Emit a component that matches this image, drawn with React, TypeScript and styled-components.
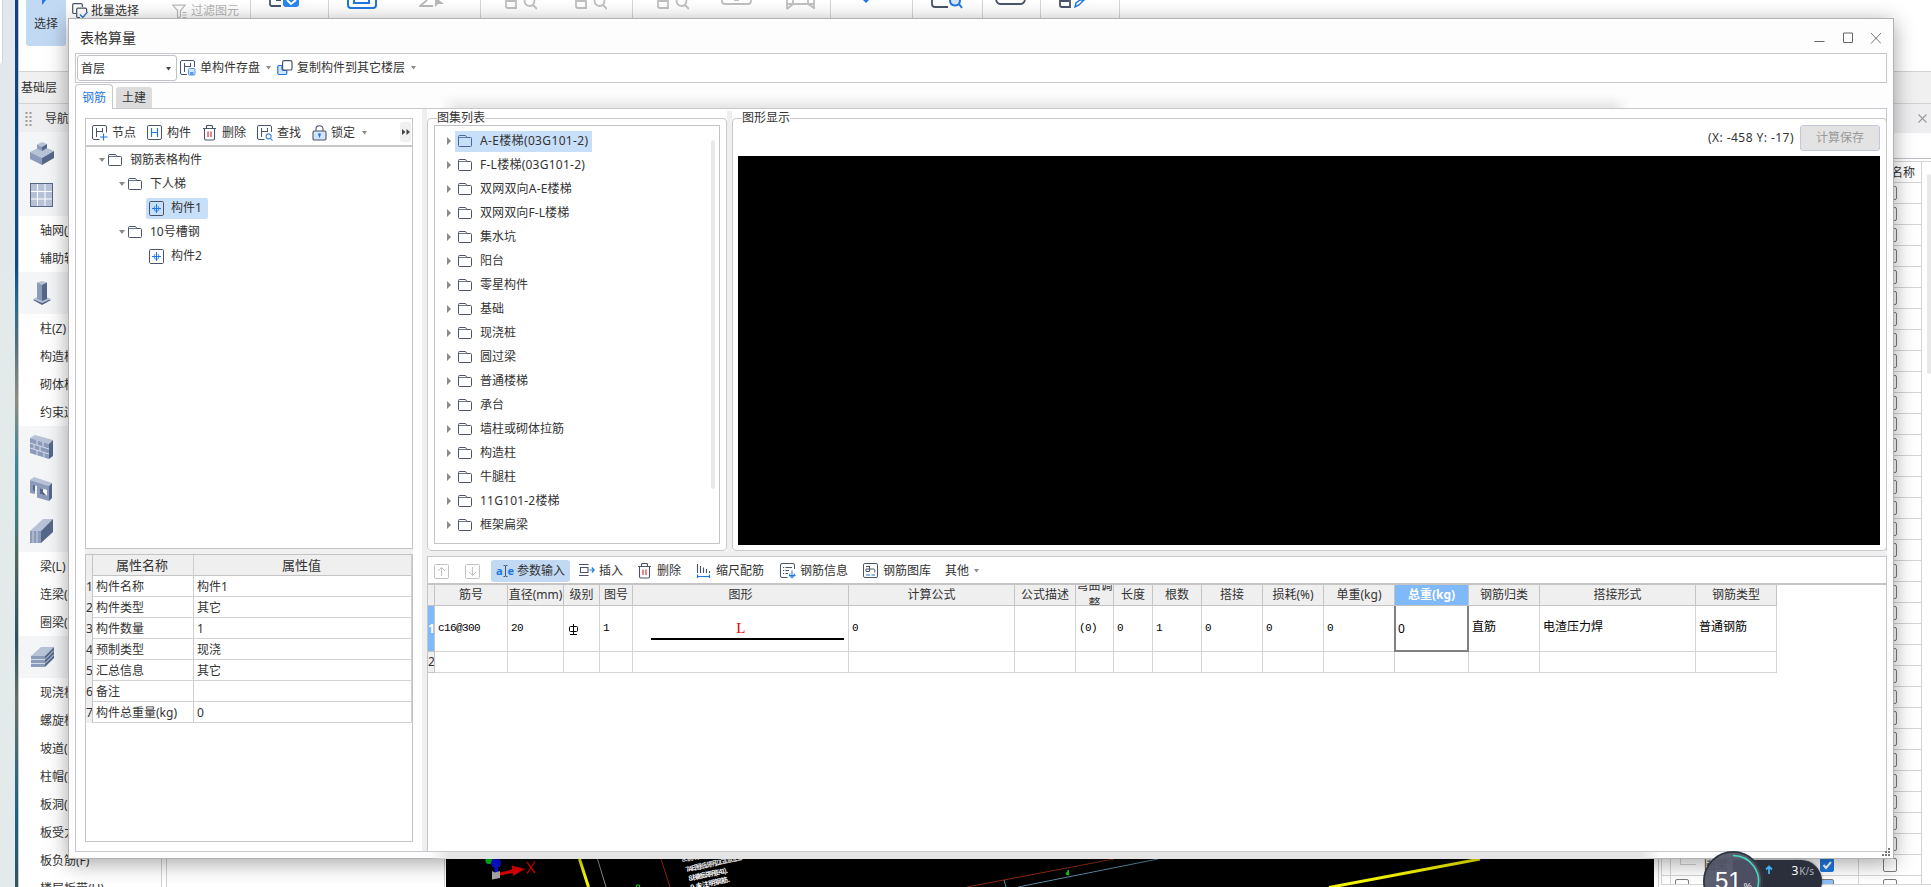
import React from 'react';
import styled, { createGlobalStyle, css } from 'styled-components';

const INK = '#4a5468';
const BLUE = '#1f78e0';
const PALE = '#d4e5fb';

type Tone = { selected?: boolean };

/* ---------- data ---------- */

type NavEntry = { label?: string; icon?: React.ReactNode };

const atlas = [
  { name: 'A-E楼梯(03G101-2)', spacing: 0.35 },
  { name: 'F-L楼梯(03G101-2)', spacing: 0.25 },
  { name: '双网双向A-E楼梯', spacing: 0.2 },
  { name: '双网双向F-L楼梯', spacing: 0.1 },
  { name: '集水坑' },
  { name: '阳台' },
  { name: '零星构件' },
  { name: '基础' },
  { name: '现浇桩' },
  { name: '圆过梁' },
  { name: '普通楼梯' },
  { name: '承台' },
  { name: '墙柱或砌体拉筋' },
  { name: '构造柱' },
  { name: '牛腿柱' },
  { name: '11G101-2楼梯', spacing: 0.2 },
  { name: '框架扁梁' },
];

const properties = [
  ['构件名称', '构件1'],
  ['构件类型', '其它'],
  ['构件数量', '1'],
  ['预制类型', '现浇'],
  ['汇总信息', '其它'],
  ['备注', ''],
  ['构件总重量(kg)', '0'],
];

const columns = [
  { title: '筋号', width: 73, value: 'c16@300' },
  { title: '直径(mm)', width: 56, value: '20' },
  { title: '级别', width: 36, value: 'grade' },
  { title: '图号', width: 33, value: '1' },
  { title: '图形', width: 216, value: 'shape' },
  { title: '计算公式', width: 166, value: '0' },
  { title: '公式描述', width: 61, value: '' },
  { title: '弯曲调整', width: 38, value: '(0)' },
  { title: '长度', width: 39, value: '0' },
  { title: '根数', width: 49, value: '1' },
  { title: '搭接', width: 61, value: '0' },
  { title: '损耗(%)', width: 61, value: '0' },
  { title: '单重(kg)', width: 71, value: '0' },
  { title: '总重(kg)', width: 74, value: '0', current: true },
  { title: '钢筋归类', width: 71, value: '直筋', han: true },
  { title: '搭接形式', width: 156, value: '电渣压力焊', han: true },
  { title: '钢筋类型', width: 81, value: '普通钢筋', han: true },
];

/* ---------- icons ---------- */

const Svg = ({
  w = 16,
  h = 16,
  children,
}: {
  w?: number;
  h?: number;
  children: React.ReactNode;
}) => (
  <svg width={w} height={h} viewBox={`0 0 ${w} ${h}`} fill="none" style={{ flex: 'none' }}>
    {children}
  </svg>
);

const FolderIcon = ({ selected }: Tone) => (
  <Svg w={14} h={12}>
    <path
      d="M.5 10.500V1.500q0-1 1-1H7.500l1.500 2h3.500q1 0 1 1v7q0 1-1 1h-11q-1 0-1-1z"
      stroke={selected ? '#47669a' : INK}
    />
    <path d="M1 2.500h8" stroke={selected ? '#47669a' : INK} strokeWidth=".8" />
  </Svg>
);

const MemberIcon = () => (
  <Svg w={15} h={15}>
    <rect x=".5" y=".5" width="14" height="14" rx="1.2" stroke={INK} />
    <path d="M7.500 3v9M3 7.500h9" stroke={BLUE} />
    <path d="M6 5Q4 7.500 6 10h3Q11 7.500 9 5" stroke={BLUE} strokeWidth=".8" />
  </Svg>
);

const NodeIcon = () => (
  <Svg>
    <path d="M7.500 14.500H2q-1.500 0-1.500-1.500V2Q.5.500 2 .5h11q1.500 0 1.500 1.500v5.500" stroke={INK} />
    <path d="M4.500 3v9M10.500 3v4.500M4.500 6.500h6" stroke={INK} />
    <path d="M11.500 8.500v7M8 12h7.500" stroke={BLUE} strokeWidth="1.2" />
  </Svg>
);

const PartIcon = () => (
  <Svg>
    <rect x=".5" y=".5" width="14" height="14" rx="1.400" stroke={INK} />
    <path d="M4.500 3v9M10.500 3v9M4.500 7.500h6" stroke={BLUE} strokeWidth="1.200" />
  </Svg>
);

const TrashIcon = () => (
  <Svg>
    <path d="M1 3.500h13M4.500 3.400V1.500q0-1 1-1h4q1 0 1 1v1.800M2.500 3.800v9.700q0 1.500 1.500 1.500h7q1.500 0 1.500-1.500V3.800" stroke={INK} strokeWidth="1.100" />
    <path d="M6 6.500V12M9 6.500V12" stroke="#d9333f" strokeWidth="1.200" />
  </Svg>
);

const FindIcon = () => (
  <Svg>
    <path d="M7.500 14.500H2q-1.500 0-1.500-1.500V2Q.5.500 2 .5h11q1.500 0 1.500 1.500v5" stroke={INK} />
    <path d="M4.500 3v9M10.500 3v4M4.500 6.500h6" stroke={INK} />
    <circle cx="11.600" cy="11.400" r="2.500" stroke="#3a8ae6" strokeWidth="1.100" />
    <path d="M13.400 13.300l2.200 2.300" stroke="#3a8ae6" strokeWidth="1.100" />
  </Svg>
);

const LockIcon = () => (
  <Svg w={15}>
    <path d="M4 6V4q0-3.300 3.500-3.300T11 4v2" stroke={INK} strokeWidth="1.100" />
    <rect x="1" y="6" width="13" height="9" rx="1.200" stroke={INK} strokeWidth="1.100" fill={PALE} />
    <path d="M7.500 9v3.500" stroke={BLUE} strokeWidth="1.200" />
    <circle cx="7.500" cy="9.600" r="1.400" fill={BLUE} />
  </Svg>
);

const SaveIcon = () => (
  <Svg>
    <path d="M7 14.500H2q-1.500 0-1.500-1.500V2Q.5.500 2 .5h11q1.500 0 1.500 1.500v5" stroke={INK} />
    <path d="M4.500 3v9M10.500 3v4M4.500 6.500h6" stroke={INK} />
    <rect x="8.500" y="8.500" width="6.500" height="6.500" rx=".8" stroke="#5a9bea" fill={PALE} />
    <path d="M10 12h3.500v3H10z" fill="#5a9bea" />
  </Svg>
);

const CopyIcon = () => (
  <Svg>
    <path d="M5 5.500H2Q.8 5.500.8 6.700v6.600q0 1.200 1.200 1.200h6.600q1.200 0 1.200-1.200V10.500H6.200Q5 10.500 5 9.300z" stroke={BLUE} strokeWidth="1.200" fill={PALE} />
    <rect x="5.600" y=".6" width="9.400" height="9.400" rx="1.600" stroke={INK} strokeWidth="1.200" fill="#fff" />
  </Svg>
);

const ArrowBoxIcon = ({ down }: { down?: boolean }) => (
  <Svg w={15} h={15}>
    <rect x=".5" y=".5" width="14" height="14" rx="1" stroke="#c3c3c3" />
    <path
      d={down ? 'M7.500 3v8.500M4 8l3.500 3.500L11 8' : 'M7.500 12V3.500M4 7l3.500-3.500L11 7'}
      stroke="#c3c3c3"
    />
  </Svg>
);

const InsertIcon = () => (
  <Svg>
    <path d="M0 1.500h9.500M0 12.500h9.500M1.500 4.500h7.500v5H1.500z" stroke={INK} strokeWidth="1.100" />
    <path d="M10.500 7H15M12.800 4.500L15.200 7l-2.400 2.500" stroke={BLUE} strokeWidth="1.200" />
  </Svg>
);

const ScaleIcon = () => (
  <Svg>
    <path d="M1.500 1v9M4.500 3v7M7.500 4.500V10M10.500 6v4M13.500 8v2" stroke={INK} strokeWidth="1.100" />
    <path d="M1.500 11.500V15M13.500 11.500V15M1.500 13.500h12" stroke={BLUE} strokeWidth="1.200" />
  </Svg>
);

const InfoIcon = () => (
  <Svg>
    <path d="M7.500 14.500H2q-1.500 0-1.500-1.500V2Q.5.500 2 .5h11q1.500 0 1.500 1.500v4" stroke={INK} />
    <path d="M3 4.500h1.200M5.500 4.500H12M3 7.500h1.200M5.500 7.500H9M3 10.500h1.200M5.500 10.500H8" stroke={INK} />
    <path d="M12 7.500v8M9 12.500h6.500M10 10.500q-1.500 2 .5 3.500h3q2-1.500.5-3.500" stroke={BLUE} />
  </Svg>
);

const LibraryIcon = () => (
  <Svg>
    <rect x=".5" y=".5" width="14" height="14" rx="1.400" stroke={INK} />
    <path d="M3 3.500h3.500v5H3V6h7.500q1.300 0 1.300 1.300V9.500M6.500 3v3" stroke={INK} />
    <path d="M3 12h4M8.500 12h3.500" stroke={BLUE} strokeWidth="1.200" />
  </Svg>
);

const FilterIcon = () => (
  <Svg>
    <path d="M.8 2.200h12.400L8.500 7.500v6L5.500 16V7.500zM10.500 9.500h4M10.500 12h4M10.500 14.500h4" stroke="#bdbdbd" strokeWidth="1.200" />
  </Svg>
);

const BatchIcon = () => (
  <Svg>
    <path d="M4 10.500H2q-1.300 0-1.300-1.300V2Q.7.700 2 .7h7q1.300 0 1.300 1.300v2" stroke={INK} strokeWidth="1.200" />
    <path d="M8 14.500H6q-1.300 0-1.300-1.300V6.500Q4.700 5.200 6 5.200h7.300q1.300 0 1.300 1.300V9" stroke={INK} strokeWidth="1.200" />
    <path d="M8 11.500l2.800 3L15.500 9" stroke={BLUE} strokeWidth="1.300" />
  </Svg>
);

const BlocksIcon = () => (
  <Svg w={24} h={24}>
    <path d="M0 11l12-6 12 5-12 7z" fill="#b8c2d6" />
    <path d="M0 11l12 6v7L0 18z" fill="#8d9bbb" />
    <path d="M12 17l12-7v7l-12 7z" fill="#556789" />
    <path d="M7 3.500L12 1l5 2-5 3z" fill="#b8c2d6" />
    <path d="M7 3.500L12 6v4L7 7.500z" fill="#8d9bbb" />
    <path d="M12 6l5-3v4l-5 3z" fill="#556789" />
  </Svg>
);

const AxisIcon = () => (
  <Svg w={24} h={24}>
    <rect x=".5" y=".5" width="22" height="23" fill="#b8c2d6" stroke="#556789" />
    <path d="M7.500 1v22M15 1v22M1 8.500h21M1 16h21" stroke="#fff" />
  </Svg>
);

const ColumnIcon = () => (
  <Svg w={24} h={24}>
    <path d="M3 19l9-4 9 4-9 5z" fill="#556789" />
    <path d="M3 18l9-4 9 4-9 4z" fill="#b8c2d6" />
    <path d="M7 1.500h5V20l-5-2z" fill="#8d9bbb" />
    <path d="M12 1.500h5V18l-5 2z" fill="#556789" />
    <path d="M7 1.500L12 0l5 1.500L12 4z" fill="#b8c2d6" />
  </Svg>
);

const WallIcon = () => (
  <Svg w={24} h={24}>
    <path d="M0 3l5-3 18 5-4 4z" fill="#b8c2d6" />
    <path d="M0 3l19 6v15L0 18z" fill="#8d9bbb" />
    <path d="M19 9l4-4v16l-4 3z" fill="#556789" />
    <path d="M0 8l19 6M0 13l19 6M7 5v5M13 7v5M4 9.500v5M10 11.500v5M7 15v5M14 17.500v5" stroke="#d5dbe8" />
  </Svg>
);

const OpeningIcon = () => (
  <Svg w={24} h={24}>
    <path d="M0 3l4-3 18 6-3 3z" fill="#b8c2d6" />
    <path d="M0 3l19 6v15L7 20.500V9L5 8.500V17l-5-1z" fill="#8d9bbb" />
    <path d="M5 8.500V15l-2-2V8zM19 9l3-3v15l-3 3z" fill="#556789" />
    <path d="M10 11l7 2v6l-7-2z" fill="#fff" />
    <path d="M10 11l3 1v3l4 4-7-2z" fill="#556789" />
  </Svg>
);

const BeamIcon = () => (
  <Svg w={24} h={24}>
    <path d="M0 12L13 0h10L11 12z" fill="#b8c2d6" />
    <path d="M0 12h11v12H0z" fill="#8d9bbb" />
    <path d="M11 12L23 0v13L11 24z" fill="#556789" />
    <path d="M3 12v12M7 12v12" stroke="#c9d0e0" />
  </Svg>
);

const SlabIcon = () => (
  <Svg w={24} h={24}>
    <path d="M1 11L11 2h13L15 11z" fill="#b8c2d6" />
    <path d="M1 11h14v11H1z" fill="#8d9bbb" />
    <path d="M15 11l9-9v11l-9 9z" fill="#556789" />
    <path d="M1 14.500h14l9-9M1 18.500h14l9-9" stroke="#d5dbe8" />
  </Svg>
);

const Caret = () => (
  <Svg w={5} h={4}>
    <path d="M0 0h5L2.500 3.500z" fill="#8a8a8a" />
  </Svg>
);

/* ribbon icons are cut off by the top edge */
const GreyView = () => (
  <Svg w={32} h={10}>
    <path d="M1 0v6q0 2 2 2h8V0M1 1h9" stroke="#c0c0c0" strokeWidth="1.800" />
    <path d="M19.500 0q0 6 5 6t5-6M28 5l4 4" stroke="#c0c0c0" strokeWidth="1.800" />
  </Svg>
);

const navEntries: NavEntry[] = [
  { icon: <BlocksIcon /> },
  { icon: <AxisIcon /> },
  { label: '轴网(J)' },
  { label: '辅助轴' },
  { icon: <ColumnIcon /> },
  { label: '柱(Z)' },
  { label: '构造柱' },
  { label: '砌体柱' },
  { label: '约束边' },
  { icon: <WallIcon /> },
  { icon: <OpeningIcon /> },
  { icon: <BeamIcon /> },
  { label: '梁(L)' },
  { label: '连梁(G)' },
  { label: '圈梁(E)' },
  { icon: <SlabIcon /> },
  { label: '现浇板' },
  { label: '螺旋板' },
  { label: '坡道(P)' },
  { label: '柱帽(V)' },
  { label: '板洞(N)' },
  { label: '板受力' },
  { label: '板负筋(F)' },
  { label: '楼层板带(H)' },
];

/* ---------- background application ---------- */

const Ribbon = () => (
  <RibbonBar>
    <RibbonGroup width={232} pad={7} gap={0}>
      <SelectButton>
        <Svg w={14} h={8}>
          <path d="M3 0v5l4-5z" fill={BLUE} />
        </Svg>
        选择
      </SelectButton>
      <RibbonItem space={6}>
        <BatchIcon />
        批量选择
      </RibbonItem>
      <RibbonItem space={33} muted>
        <FilterIcon />
        过滤图元
      </RibbonItem>
    </RibbonGroup>
    <RibbonGroup width={78} pad={18}>
      <Svg w={31} h={18}>
        <path d="M1 0v4q0 2 2 2h9M7 0h5" stroke={INK} strokeWidth="1.800" />
        <path d="M14 0h16v4q0 3-3 3H17q-3 0-3-3z" fill="#2a86f3" />
        <path d="M18 0l4 4 5-4" stroke="#fff" strokeWidth="2" />
      </Svg>
    </RibbonGroup>
    <RibbonGroup width={152} pad={18} gap={42}>
      <Svg w={30} h={10}>
        <path d="M1 0v5q0 3 3 3h22q3 0 3-3V0M7 0v3h15V0" stroke={BLUE} strokeWidth="2" />
      </Svg>
      <Svg w={28} h={10}>
        <path d="M8 0L1 6h13" stroke="#b9b9b9" strokeWidth="1.800" />
        <path d="M16 0v7l3-3h6L20 0z" fill="#b9b9b9" />
      </Svg>
    </RibbonGroup>
    <RibbonGroup width={152} pad={24} gap={38}>
      <GreyView />
      <GreyView />
    </RibbonGroup>
    <RibbonGroup width={198} pad={24} gap={32}>
      <GreyView />
      <Svg w={32} h={10}>
        <path d="M1 0v1q0 3 3 3h23q3 0 3-3V0M13 0h5" stroke="#c0c0c0" strokeWidth="1.800" />
      </Svg>
      <Svg w={32} h={10}>
        <path d="M2 0v9M29 0v9M2 4h27M8 0v4M8 4L2 9M23 0v4l6 4" stroke="#c0c0c0" strokeWidth="1.800" />
      </Svg>
    </RibbonGroup>
    <RibbonGroup width={82} pad={32}>
      <Svg w={6} h={4}>
        <path d="M0 0h6L3 3z" fill={BLUE} />
      </Svg>
    </RibbonGroup>
    <RibbonGroup width={70} pad={18}>
      <Svg w={32} h={10}>
        <path d="M1 0v4q0 3 3 3h13" stroke={INK} strokeWidth="1.800" />
        <path d="M19 0q0 5.500 5 5.500T29 0M28 4l3 4" stroke={BLUE} strokeWidth="2" fill={PALE} />
      </Svg>
    </RibbonGroup>
    <RibbonGroup width={58} pad={12}>
      <Svg w={32} h={6}>
        <path d="M1 0q1 4 5 4h19q4 0 5-4" stroke={INK} strokeWidth="1.800" />
      </Svg>
    </RibbonGroup>
    <RibbonGroup width={79} pad={18}>
      <Svg w={32} h={10}>
        <path d="M1 0v5q0 2 2 2h8V0M1 1h9" stroke={INK} strokeWidth="1.800" />
        <path d="M16 7l1-4 4-3h4l-5 5z" stroke={BLUE} strokeWidth="1.400" />
      </Svg>
    </RibbonGroup>
  </RibbonBar>
);

const Viewport = () => (
  <svg width="1208" height="28" viewBox="0 0 1208 28">
    <rect width="1208" height="28" fill="#000" />
    <circle cx="43" cy="1.500" r="3.500" fill="#00c814" />
    <circle cx="50" cy="4" r="5" fill="#0a10e0" />
    <path d="M48.500 6h3.500v8h-3.500z" fill="#0a10e0" />
    <path d="M46 12l3 1.500 5-1.500v7l-8 1.500z" fill="#a8a8a8" />
    <path d="M54 13.500l12-3V6.500l13 3.500-12 7v-3l-13 2.500z" fill="#e00000" />
    <path d="M81 3l8 11M89 2.500l-8 12" stroke="#e00000" strokeWidth="1.300" />
    <path d="M133.500 0l9 28" stroke="#f5f500" strokeWidth="3" />
    <path d="M151.500 0l8.500 28" stroke="#8a8a8a" />
    <path d="M215 0l9 28" stroke="#8f2c10" />
    <path d="M521 28L668 0" stroke="#8f2c10" />
    <path d="M572 28L712 0M558 21l2 7" stroke="#5b8ba0" />
    <path d="M620 15l2.500-4v5z" fill="#00d020" stroke="#00d020" />
    <path d="M190.500 28v-2h3v2" stroke="#00d020" fill="none" />
    <path d="M883 28.500L1034 0" stroke="#f5f500" strokeWidth="3" />
    <g fill="#fff" fontSize="7" fontFamily="Noto Sans CJK SC, sans-serif" fontWeight="700">
      <text transform="translate(236 3) rotate(-10)" textLength="18">8.说明</text>
      <text transform="translate(240 13) rotate(-12)" textLength="58">7.4.E.图纸说明22G101-01.31</text>
      <text transform="translate(243 22) rotate(-12)" textLength="40">8.梯板说明(E41).</text>
      <text transform="translate(245 31) rotate(-12)" textLength="40">9.未注明钢筋.</text>
    </g>
  </svg>
);

const BackApp = () => (
  <Desktop>
    <DesktopStrip>
      <StripCard />
    </DesktopStrip>
    <AppEdge />
    <AppFrame>
      <Ribbon />
      <FloorBar>基础层</FloorBar>
      <AppBody>
        <NavPane>
          <NavTitle>
            <Svg w={7} h={15}>
              <path d="M1.500 0v15M5.500 0v15" stroke="#999" strokeWidth="2" strokeDasharray="2 2" />
            </Svg>
            导航栏
          </NavTitle>
          {navEntries.map((entry, idx) =>
            entry.icon ? (
              <NavSection key={idx}>{entry.icon}</NavSection>
            ) : (
              <NavRow key={idx}>{entry.label}</NavRow>
            )
          )}
        </NavPane>
        <ListPane />
        <CanvasPane>
          <Viewport />
        </CanvasPane>
        <LayerPane>
          <LayerTitle>
            <Svg w={9} h={9}>
              <path d="M.5.5l8 8M8.500.5l-8 8" stroke="#999" strokeWidth="1.100" />
            </Svg>
          </LayerTitle>
          <LayerFilter />
          <LayerBody>
            <LayerTable>
              <LayerHead>名称</LayerHead>
              {Array.from({ length: 32 }).map((_, idx) => (
                <LayerRow key={idx}>
                  <LayerCheck>
                    <CheckBox />
                  </LayerCheck>
                </LayerRow>
              ))}
              <LayerRow>
                <LayerName>
                  <Svg w={16} h={20}>
                    <path d="M.5 0v9.500H16" stroke="#d0d0d0" />
                  </Svg>
                  圈梁
                </LayerName>
                <LayerShow>
                  <CheckBox checked>
                    <Svg w={12} h={12}>
                      <path d="M2.500 6l2.500 3 5-6" stroke="#fff" strokeWidth="2" />
                    </Svg>
                  </CheckBox>
                </LayerShow>
                <LayerCheck>
                  <CheckBox />
                </LayerCheck>
              </LayerRow>
              <LayerRow last>
                <LayerName root>
                  <CheckBox />
                </LayerName>
                <LayerShow>
                  <CheckBox partial />
                </LayerShow>
                <LayerCheck>
                  <CheckBox />
                </LayerCheck>
              </LayerRow>
            </LayerTable>
            <LayerScroll />
          </LayerBody>
        </LayerPane>
      </AppBody>
    </AppFrame>
  </Desktop>
);

/* ---------- dialog ---------- */

const ComponentTree = () => (
  <Tree>
    <TreeRow level={0}>
      <Expanded />
      <FolderIcon />
      <TreeText>钢筋表格构件</TreeText>
    </TreeRow>
    <TreeRow level={1}>
      <Expanded />
      <FolderIcon />
      <TreeText>下人梯</TreeText>
    </TreeRow>
    <TreeRow level={2}>
      <TreeLeaf selected>
        <MemberIcon />
        构件1
      </TreeLeaf>
    </TreeRow>
    <TreeRow level={1}>
      <Expanded />
      <FolderIcon />
      <TreeText>10号槽钢</TreeText>
    </TreeRow>
    <TreeRow level={2}>
      <TreeLeaf>
        <MemberIcon />
        构件2
      </TreeLeaf>
    </TreeRow>
  </Tree>
);

const PropertyTable = () => (
  <PropertyBox>
    <PropertyRow head>
      <PropertyNo />
      <PropertyCell>属性名称</PropertyCell>
      <PropertyCell>属性值</PropertyCell>
    </PropertyRow>
    {properties.map(([name, value], idx) => (
      <PropertyRow key={name}>
        <PropertyNo>{idx + 1}</PropertyNo>
        <PropertyCell>{name}</PropertyCell>
        <PropertyCell>{value}</PropertyCell>
      </PropertyRow>
    ))}
  </PropertyBox>
);

const renderValue = (value: string) => {
  if (value === 'grade') {
    return (
      <GradeMark>
        <Svg w={9} h={11}>
          <path d="M.5 3.500q0-1 1-1h6q1 0 1 1v3q0 1-1 1h-6q-1 0-1-1zM4.500 0v10M1 10.500h7" stroke="#000" />
        </Svg>
      </GradeMark>
    );
  }
  if (value === 'shape') {
    return (
      <Shape>
        <ShapeName>L</ShapeName>
      </Shape>
    );
  }
  return value;
};

const RebarGrid = () => (
  <Grid>
    <GridRow height={21}>
      <HeadCell width={7} />
      {columns.map(col => (
        <HeadCell key={col.title} width={col.width} selected={col.current}>
          {col.title}
        </HeadCell>
      ))}
    </GridRow>
    <GridRow height={46}>
      <NumberCell selected>1</NumberCell>
      {columns.map(col => (
        <Cell key={col.title} width={col.width} current={col.current} han={col.han}>
          {renderValue(col.value)}
        </Cell>
      ))}
    </GridRow>
    <GridRow height={21}>
      <NumberCell>2</NumberCell>
      {columns.map(col => (
        <Cell key={col.title} width={col.width} />
      ))}
    </GridRow>
  </Grid>
);

const Dialog = () => (
  <DialogFrame>
    <TitleBar>
      表格算量
      <WindowButtons>
        <Svg w={11} h={12}>
          <path d="M.5 9.500h10" stroke="#666" />
        </Svg>
        <Svg w={11} h={12}>
          <path d="M1.500 1h9v9.500h-9z" stroke="#666" />
        </Svg>
        <Svg w={11} h={12}>
          <path d="M1 1l10 10.500M11 1L1 11.500" stroke="#777" />
        </Svg>
      </WindowButtons>
    </TitleBar>
    <FloorTools>
      <FloorSelect>
        首层
        <Svg w={5} h={4}>
          <path d="M0 0h5L2.500 3.500z" fill="#444" />
        </Svg>
      </FloorSelect>
      <Tool>
        <SaveIcon />
        单构件存盘
      </Tool>
      <Caret />
      <Tool>
        <CopyIcon />
        复制构件到其它楼层
      </Tool>
      <Caret />
    </FloorTools>
    <Tabs>
      <Tab active>钢筋</Tab>
      <Tab>土建</Tab>
      <TabShade />
    </Tabs>
    <Panel>
      <LeftColumn>
        <TreeBox>
          <TreeTools>
            <Tool>
              <NodeIcon />
              节点
            </Tool>
            <Tool>
              <PartIcon />
              构件
            </Tool>
            <Tool>
              <TrashIcon />
              删除
            </Tool>
            <Tool>
              <FindIcon />
              查找
            </Tool>
            <Tool>
              <LockIcon />
              锁定
            </Tool>
            <CaretWrap>
              <Caret />
            </CaretWrap>
            <MoreButton>
              <Svg w={8} h={6}>
                <path d="M0 0l3.500 3L0 6zM4.500 0L8 3 4.500 6z" fill="#444" />
              </Svg>
            </MoreButton>
          </TreeTools>
          <ComponentTree />
        </TreeBox>
        <HSplit size={5} />
        <PropertyTable />
      </LeftColumn>
      <VSplit />
      <RightColumn>
        <TopRow>
          <GroupBox width={300}>
            <GroupTitle>图集列表</GroupTitle>
            <AtlasBox>
              {atlas.map((item, idx) => (
                <AtlasRow key={item.name}>
                  <Svg w={4} h={8}>
                    <path d="M0 0l4 4-4 4z" fill="#8a8a8a" />
                  </Svg>
                  <AtlasName selected={idx === 0} spacing={item.spacing}>
                    <FolderIcon selected={idx === 0} />
                    {item.name}
                  </AtlasName>
                </AtlasRow>
              ))}
              <AtlasRow last>
                <FolderIcon />
              </AtlasRow>
              <AtlasScroll />
            </AtlasBox>
          </GroupBox>
          <VSplit />
          <GroupBox width={1155}>
            <GroupTitle>图形显示</GroupTitle>
            <ViewTools>
              <Coordinates>(X: -458 Y: -17)</Coordinates>
              <SaveButton>计算保存</SaveButton>
            </ViewTools>
            <ViewCanvas />
          </GroupBox>
        </TopRow>
        <HSplit size={5} />
        <GridPanel>
          <GridTools>
            <ArrowBoxIcon />
            <ToolGap size={16} />
            <ArrowBoxIcon down />
            <ToolGap size={11} />
            <ActiveTool>
              <InputMark>
                a
                <Svg w={5} h={12}>
                  <path d="M.5.500h1.500l.5.500.5-.5h1.500M2.500 1v10M.5 11.500h1.500l.5-.5.5.5h1.500" stroke={INK} />
                </Svg>
                e
              </InputMark>
              参数输入
            </ActiveTool>
            <ToolGap size={9} />
            <Tool>
              <InsertIcon />
              插入
            </Tool>
            <ToolGap size={14} />
            <Tool>
              <TrashIcon />
              删除
            </Tool>
            <ToolGap size={15} />
            <Tool>
              <ScaleIcon />
              缩尺配筋
            </Tool>
            <ToolGap size={16} />
            <Tool>
              <InfoIcon />
              钢筋信息
            </Tool>
            <ToolGap size={15} />
            <Tool>
              <LibraryIcon />
              钢筋图库
            </Tool>
            <ToolGap size={14} />
            其他
            <ToolGap size={5} />
            <Caret />
          </GridTools>
          <RebarGrid />
        </GridPanel>
      </RightColumn>
    </Panel>
    <DialogFoot>
      <FootShade />
      <Svg w={8} h={8}>
        <path d="M6 0h2v2H6zM3 3h2v2H3zM6 3h2v2H6zM0 6h2v2H0zM3 6h2v2H3zM6 6h2v2H6z" fill="#777" />
      </Svg>
    </DialogFoot>
  </DialogFrame>
);

const SpeedMeter = () => (
  <Meter>
    <MeterBar>
      <Svg w={8} h={10}>
        <path d="M4 9V2M1 4.500l3-3 3 3" stroke="#3db4f2" strokeWidth="1.800" />
      </Svg>
      <Speed>
        3<small>K/s</small>
      </Speed>
    </MeterBar>
    <MeterDial>
      <Ring width="60" height="60" viewBox="0 0 60 60">
        <circle cx="30" cy="30" r="29" fill="none" stroke="#30333c" strokeWidth="1.500" />
        <path d="M30 4.500a25.500 25.500 0 0 1 24 34" fill="none" stroke="#45dcc0" strokeWidth="1.600" />
      </Ring>
      51<small>%</small>
    </MeterDial>
  </Meter>
);

const App = () => {
  return (
    <Screen>
      <GlobalStyle />
      <BackApp />
      <Dialog />
      <SpeedMeter />
    </Screen>
  );
};

export default App;

const GlobalStyle = createGlobalStyle`
  * {
    box-sizing: border-box;
  }
  body {
    margin: 0;
    overflow: hidden;
    font-family: 'Noto Sans', 'Noto Sans CJK SC', sans-serif;
    font-size: 12px;
    line-height: 16px;
    color: #333;
  }
  svg {
    display: block;
  }
`;

const Screen = styled.div`
  position: relative;
  width: 1931px;
  height: 887px;
  overflow: hidden;
  white-space: nowrap;
`;

const Desktop = styled.div`
  display: flex;
  height: 100%;
`;
const DesktopStrip = styled.div`
  width: 15px;
  flex: none;
  background: linear-gradient(#e2e7ed, #e3ebea 45%, #e2eaeb);
`;
const StripCard = styled.div`
  width: 3px;
  height: 64px;
  background: #fff;
  border-right: 1px solid #d0d4d8;
  border-bottom-right-radius: 4px;
`;
const AppEdge = styled.div`
  width: 3px;
  flex: none;
  background: linear-gradient(
    #10437f,
    #0f4c86 30%,
    #256b8c 34%,
    #4d6d80 38%,
    #8e8d80 45%,
    #3c8796 52%,
    #3e7f80 58%,
    #4f6660 63%,
    #2d5363 72%,
    #647068 79%,
    #1a6484 92%,
    #34545f
  );
`;
const AppFrame = styled.div`
  flex: 1;
  display: flex;
  flex-direction: column;
  border-left: 1px solid #c8c8c8;
  background-color: #fff;
  min-width: 0;
`;
const RibbonBar = styled.div`
  display: flex;
  height: 71px;
  flex: none;
`;
const RibbonGroup = styled.div<{ width: number; pad: number; gap?: number }>`
  display: flex;
  align-items: flex-start;
  gap: ${props => props.gap ?? 0}px;
  width: ${props => props.width}px;
  padding-left: ${props => props.pad}px;
  border-right: 1px solid #d6d6d6;
`;
const SelectButton = styled.div`
  display: flex;
  flex-direction: column;
  align-items: center;
  gap: 8px;
  width: 40px;
  height: 46px;
  background-color: #c2d9f3;
  border-radius: 0 0 3px 3px;
`;
const RibbonItem = styled.div<{ space: number; muted?: boolean }>`
  display: flex;
  align-items: center;
  gap: 3px;
  margin: 2px 0 0 ${props => props.space}px;
  line-height: 18px;
  color: ${props => (props.muted ? '#b5b5b5' : '#333')};
`;
const FloorBar = styled.div`
  display: flex;
  align-items: center;
  height: 33px;
  padding-left: 2px;
  background-color: #f0f0f0;
  border-top: 1px solid #d2d2d2;
  border-bottom: 1px solid #d2d2d2;
`;
const AppBody = styled.div`
  display: flex;
  height: 783px;
`;
const NavPane = styled.div`
  width: 143px;
  overflow: hidden;
  border-right: 1px solid #d0d0d0;
`;
const NavTitle = styled.div`
  display: flex;
  align-items: center;
  gap: 13px;
  height: 28px;
  padding: 2px 0 0 6px;
  background-color: #eeeef0;
`;
const NavSection = styled.div`
  display: flex;
  align-items: center;
  height: 42px;
  padding-left: 11px;
  background-color: #f4f5f7;
`;
const NavRow = styled.div`
  height: 28px;
  padding-left: 21px;
  line-height: 30px;
`;
const ListPane = styled.div`
  width: 279px;
  margin-left: 4px;
  border-left: 1px solid #d0d0d0;
  border-right: 1px solid #d0d0d0;
`;
const CanvasPane = styled.div`
  display: flex;
  align-items: flex-end;
  width: 1208px;
  margin-left: 1px;
`;
const LayerPane = styled.div`
  width: 273px;
  margin-left: 4px;
  border-left: 1px solid #ccc;
`;
const LayerTitle = styled.div`
  display: flex;
  align-items: center;
  justify-content: flex-end;
  height: 29px;
  padding-right: 4px;
  background-color: #eeeef0;
`;
const LayerFilter = styled.div`
  height: 26px;
  border-bottom: 1px solid #bfc0ca;
`;
const LayerBody = styled.div`
  display: flex;
  height: 724px;
  margin: 2px 0 0 2px;
  border-top: 1px solid #d4d4d4;
  border-left: 1px solid #d4d4d4;
  border-bottom: 1px solid #d4d4d4;
`;
const LayerTable = styled.div`
  width: 260px;
  border-right: 1px solid #d4d4d4;
`;
const LayerHead = styled.div`
  height: 21px;
  padding-right: 6px;
  line-height: 22px;
  text-align: right;
  border-bottom: 1px solid #d4d4d4;
`;
const LayerRow = styled.div<{ last?: boolean }>`
  display: flex;
  justify-content: flex-end;
  height: ${props => (props.last ? 8 : 21)}px;
  overflow: hidden;
  border-bottom: ${props => (props.last ? 0 : 1)}px solid #d4d4d4;
`;
const LayerName = styled.div<{ root?: boolean }>`
  display: flex;
  align-items: center;
  gap: 8px;
  height: 20px;
  width: 126px;
  padding-left: ${props => (props.root ? 4 : 9)}px;
  border-left: 1px solid #d4d4d4;
  border-right: 1px solid #d4d4d4;
`;
const LayerShow = styled.div`
  display: flex;
  align-items: center;
  height: 20px;
  width: 63px;
  padding-left: 24px;
  border-right: 1px solid #d4d4d4;
`;
const LayerCheck = styled.div`
  display: flex;
  align-items: center;
  height: 20px;
  width: 62px;
  padding-left: 24px;
`;
const CheckBox = styled.span<{ checked?: boolean; partial?: boolean }>`
  width: 14px;
  height: 14px;
  border: 1px solid ${props => (props.checked ? BLUE : '#7c7c7c')};
  border-radius: 2px;
  background-color: ${props => (props.checked ? BLUE : props.partial ? '#8fc0f8' : '#fff')};
`;
const LayerScroll = styled.div`
  width: 4px;
  height: 200px;
  margin: 12px 0 0 5px;
  background-color: #e8e8e8;
  border-radius: 2px;
`;

const DialogFrame = styled.div`
  position: absolute;
  left: 68px;
  top: 18px;
  width: 1826px;
  height: 841px;
  padding: 0 6px;
  background-color: #fdfdfd;
  border: 1px solid #b2b2b2;
  box-shadow: 0 4px 20px rgba(0, 0, 0, 0.36);
`;
const TitleBar = styled.div`
  display: flex;
  justify-content: space-between;
  align-items: center;
  height: 34px;
  padding: 3px 6px 0 5px;
  font-size: 14px;
`;
const WindowButtons = styled.div`
  display: flex;
  gap: 17px;
`;
const FloorTools = styled.div`
  display: flex;
  align-items: center;
  gap: 6px;
  height: 30px;
  padding-left: 1px;
  background-color: #fff;
  border: 1px solid #c6c6cc;
`;
const FloorSelect = styled.div`
  display: flex;
  align-items: center;
  justify-content: space-between;
  width: 100px;
  height: 26px;
  margin-right: -3px;
  padding: 1px 5px 0 3px;
  border: 1px solid #c2c2c6;
  border-radius: 3px;
`;
const Tool = styled.div`
  display: flex;
  align-items: center;
  gap: 4px;
  line-height: 18px;
`;
const Tabs = styled.div`
  display: flex;
  align-items: flex-end;
  height: 25px;
`;
const Tab = styled.div<{ active?: boolean }>`
  width: ${props => (props.active ? 38 : 36)}px;
  margin-right: 3px;
  text-align: center;
  ${props =>
    props.active
      ? css`
          height: 25px;
          margin-bottom: -1px;
          line-height: 25px;
          position: relative;
          color: ${BLUE};
          background-color: #fff;
          border: 1px solid #c6c6cc;
          border-bottom: 0;
          border-radius: 4px 4px 0 0;
        `
      : css`
          height: 21px;
          line-height: 21px;
          background-color: #dcdcdc;
          border-radius: 3px 3px 0 0;
        `}
`;
const TabShade = styled.div`
  width: 1190px;
  height: 14px;
  margin-left: 285px;
  background: linear-gradient(rgba(0, 0, 0, 0), rgba(0, 0, 0, 0.09));
  mask-image: linear-gradient(90deg, transparent, #000 18px, #000 1172px, transparent);
`;
const Panel = styled.div`
  display: flex;
  height: 744px;
  background-color: #fff;
  border: 1px solid #c6c6cc;
`;
const LeftColumn = styled.div`
  width: 346px;
  padding: 9px 9px 9px 9px;
`;
const TreeBox = styled.div`
  width: 328px;
  height: 431px;
  border: 1px solid #c4c4c4;
`;
const TreeTools = styled.div`
  display: flex;
  align-items: center;
  gap: 11px;
  height: 28px;
  padding: 2px 0 0 6px;
  border-bottom: 2px solid #c8c8c8;
`;
const CaretWrap = styled.div`
  margin-left: -4px;
`;
const MoreButton = styled.div`
  display: flex;
  align-items: center;
  justify-content: center;
  width: 11px;
  height: 20px;
  margin: -2px 1px 0 auto;
  background-color: #f0f0f0;
  border-radius: 3px;
`;
const Tree = styled.div`
  padding-top: 1px;
`;
const TreeRow = styled.div<{ level: number }>`
  display: flex;
  align-items: center;
  height: 24px;
  padding-left: ${props => 13 + props.level * 20 + (props.level === 2 ? 7 : 0)}px;
`;
const Expanded = styled.i`
  width: 0;
  height: 0;
  margin-right: 3px;
  border: 3.5px solid transparent;
  border-top: 4px solid #8a8a8a;
  border-bottom: 0;
`;
const TreeText = styled.span`
  margin-left: 8px;
`;
const selectedFill = css<Tone>`
  background-color: ${props => (props.selected ? '#c8dff9' : 'transparent')};
`;
const TreeLeaf = styled.div<Tone>`
  display: flex;
  align-items: center;
  gap: 7px;
  height: 21px;
  padding: 0 6px 0 3px;
  border-radius: 2px;
  ${selectedFill}
`;
const HSplit = styled.div<{ size: number }>`
  height: ${props => props.size}px;
  background-color: #f0f0f0;
`;
const VSplit = styled.div`
  width: 5px;
  flex: none;
  background-color: #efefef;
`;
const PropertyBox = styled.div`
  width: 328px;
  height: 288px;
  border: 1px solid #c4c4c4;
`;
const PropertyNo = styled.div`
  width: 7px;
  overflow: hidden;
  background-color: #efefef;
  border-right: 1px solid #c4c4c4;
`;
const PropertyCell = styled.div`
  padding-left: 3px;
  border-right: 1px solid #cfcfcf;
`;
const PropertyRow = styled.div<{ head?: boolean }>`
  display: grid;
  grid-template-columns: 7px 101px 218px;
  height: 21px;
  line-height: 21px;
  border-bottom: 1px solid ${props => (props.head ? '#c4c4c4' : '#d2d2d2')};
  ${props =>
    props.head &&
    css`
      font-size: 13px;
      text-align: center;
      background-color: #efefef;

      ${PropertyCell} {
        padding: 0 2px 0 0;
      }
    `}
`;
const RightColumn = styled.div`
  width: 1460px;
`;
const TopRow = styled.div`
  display: flex;
  height: 442px;
  padding-top: 2px;
`;
const GroupBox = styled.fieldset<{ width: number }>`
  width: ${props => props.width}px;
  height: 440px;
  min-width: 0;
  margin: 0;
  padding: 0 6px;
  border: 1px solid #c9c9c9;
  border-radius: 4px;
`;
const GroupTitle = styled.legend`
  height: 14px;
  margin-left: 3px;
  padding: 0;
  line-height: 13px;
`;
const AtlasBox = styled.div`
  position: relative;
  height: 419px;
  padding-top: 3px;
  overflow: hidden;
  border: 1px solid #c4c4c4;
`;
const AtlasRow = styled.div<{ last?: boolean }>`
  display: flex;
  align-items: center;
  height: 24px;
  padding-left: ${props => (props.last ? 23 : 12)}px;
`;
const AtlasName = styled.div<Tone & { spacing?: number }>`
  display: flex;
  align-items: center;
  gap: 8px;
  height: 21px;
  margin-left: 4px;
  padding: 0 4px 0 3px;
  letter-spacing: ${props => props.spacing ?? 0}px;
  ${selectedFill}
`;
const AtlasScroll = styled.div`
  position: absolute;
  right: 4px;
  top: 14px;
  width: 4px;
  height: 349px;
  background-color: #e9e9e9;
  border-radius: 2px;
`;
const ViewTools = styled.div`
  display: flex;
  justify-content: flex-end;
  align-items: center;
  gap: 6px;
  height: 31px;
  padding-bottom: 6px;
`;
const Coordinates = styled.span`
  letter-spacing: 0.45px;
`;
const SaveButton = styled.div`
  width: 80px;
  height: 26px;
  line-height: 24px;
  text-align: center;
  color: #9a9a9a;
  background-color: #e3e3e3;
  border: 1px solid #c0c8da;
  border-radius: 3px;
`;
const ViewCanvas = styled.div`
  width: 1142px;
  height: 389px;
  margin-left: -1px;
  background-color: #000;
`;
const GridPanel = styled.div`
  height: 295px;
  border: 1px solid #c4c6cc;
  border-right: 0;
  border-bottom: 0;
`;
const GridTools = styled.div`
  display: flex;
  align-items: center;
  height: 28px;
  padding: 2px 0 0 6px;
  border-bottom: 2px solid #c4c4c4;
`;
const ToolGap = styled.i<{ size: number }>`
  flex: none;
  width: ${props => props.size}px;
`;
const ActiveTool = styled.div`
  display: flex;
  align-items: center;
  gap: 4px;
  width: 79px;
  height: 22px;
  padding-left: 5px;
  background-color: #c2d9f3;
  border-radius: 3px;
`;
const InputMark = styled.span`
  display: flex;
  align-items: center;
  width: 17px;
  font-size: 11px;
  font-weight: 700;
  color: ${BLUE};
`;
const Grid = styled.div`
  width: 1349px;
`;
const GridRow = styled.div<{ height: number }>`
  display: flex;
  height: ${props => props.height}px;
`;
const HeadCell = styled.div<{ width: number } & Tone>`
  display: flex;
  align-items: center;
  justify-content: center;
  flex: none;
  width: ${props => props.width}px;
  overflow: hidden;
  line-height: 18px;
  text-align: center;
  white-space: ${props => (props.width === 38 ? 'normal' : 'nowrap')};
  word-break: break-all;
  border-right: 1px solid #c4c4c4;
  border-bottom: 1px solid #c4c4c4;
  color: ${props => (props.selected ? '#fff' : '#333')};
  font-weight: ${props => (props.selected ? 700 : 400)};
  background-color: ${props => (props.selected ? '#80b9fa' : '#efefef')};
`;
const NumberCell = styled.div<Tone>`
  display: flex;
  align-items: center;
  flex: none;
  width: 7px;
  overflow: hidden;
  border-right: 1px solid #c4c4c4;
  border-bottom: 1px solid #c4c4c4;
  color: ${props => (props.selected ? '#fff' : '#333')};
  font-weight: ${props => (props.selected ? 700 : 400)};
  background-color: ${props => (props.selected ? '#80b9fa' : '#efefef')};
`;
const Cell = styled.div<{ width: number; current?: boolean; han?: boolean }>`
  display: flex;
  align-items: center;
  flex: none;
  width: ${props => props.width}px;
  padding: 0 0 1px 3px;
  font-family: 'Liberation Mono', 'Noto Sans CJK SC', monospace;
  font-size: ${props => (props.han ? 12 : 11)}px;
  letter-spacing: ${props => (props.han ? 0 : -0.6)}px;
  color: #000;
  border-right: 1px solid #d4d4d4;
  border-bottom: 1px solid #d4d4d4;
  ${props =>
    props.current &&
    css`
      margin-left: -1px;
      width: ${props.width + 1}px;
      padding: 2px 0 0 2px;
      font-family: 'Noto Sans', sans-serif;
      font-size: 12px;
      border: 2px solid #808080;
      border-top: 0;
    `}
`;
const GradeMark = styled.div`
  padding: 3px 0 0 2px;
`;
const Shape = styled.div`
  width: 193px;
  margin: 3px 0 0 15px;
  text-align: center;
  border-bottom: 2px solid #000;
`;
const ShapeName = styled.span`
  padding-right: 14px;
  font-family: 'Liberation Serif', serif;
  font-size: 15px;
  color: #e60000;
`;
const DialogFoot = styled.div`
  display: flex;
  justify-content: space-between;
  align-items: flex-start;
  height: 7px;
  margin-right: -3px;

  > svg {
    margin-top: -4px;
  }
`;
const FootShade = styled.div`
  width: 1230px;
  height: 7px;
  margin-left: 355px;
  background-color: #e4e4e4;
  mask-image: linear-gradient(90deg, transparent, #000 20px, #000 1210px, transparent);
`;

const Meter = styled.div`
  position: absolute;
  left: 1703px;
  top: 851px;
  width: 119px;
  height: 60px;
`;
const MeterBar = styled.div`
  display: flex;
  justify-content: space-between;
  height: 42px;
  margin: 9px 0 0 30px;
  padding: 5px 8px 0 32px;
  background-color: #2b2f3c;
  border-radius: 0 21px 21px 0;
  box-shadow: 0 0 3px rgba(0, 0, 0, 0.4);
`;
const Speed = styled.div`
  font-size: 12px;
  line-height: 12px;
  color: #fff;

  small {
    margin-left: 1px;
    font-size: 10px;
    color: #aeb2bd;
  }
`;
const MeterDial = styled.div`
  position: absolute;
  left: 0;
  top: 0;
  width: 60px;
  height: 60px;
  padding: 17px 0 0 12px;
  font-family: 'Liberation Sans', sans-serif;
  font-size: 24px;
  line-height: 26px;
  color: #fff;
  background-color: rgba(78, 82, 100, 0.93);
  border-radius: 50%;

  small {
    margin-left: 2px;
    font-size: 9px;
  }
`;
const Ring = styled.svg`
  position: absolute;
  left: 0;
  top: 0;
`;
